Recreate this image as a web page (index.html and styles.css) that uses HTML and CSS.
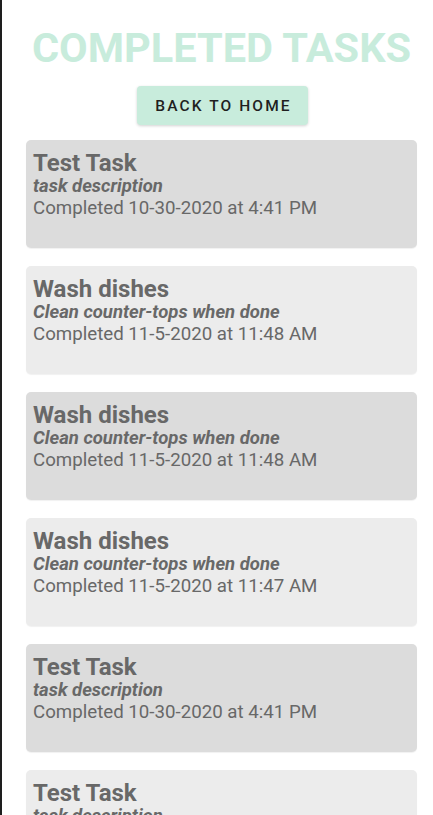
FILE: index.html
```html
<!DOCTYPE html>
<html>
<head>
<meta charset="utf-8">
<link rel="stylesheet" href="styles.css">
</head>
<body>
<div class="page">
  <h1 class="title">COMPLETED TASKS</h1>
  <div class="btn-row"><button class="btn">BACK TO HOME</button></div>
  <div class="list">
    <div class="card dark">
      <div class="name">Test Task</div>
      <div class="desc">task description</div>
      <div class="when">Completed 10-30-2020 at 4:41 PM</div>
    </div>
    <div class="card light">
      <div class="name">Wash dishes</div>
      <div class="desc">Clean counter-tops when done</div>
      <div class="when">Completed 11-5-2020 at 11:48 AM</div>
    </div>
    <div class="card dark">
      <div class="name">Wash dishes</div>
      <div class="desc">Clean counter-tops when done</div>
      <div class="when">Completed 11-5-2020 at 11:48 AM</div>
    </div>
    <div class="card light">
      <div class="name">Wash dishes</div>
      <div class="desc">Clean counter-tops when done</div>
      <div class="when">Completed 11-5-2020 at 11:47 AM</div>
    </div>
    <div class="card dark">
      <div class="name">Test Task</div>
      <div class="desc">task description</div>
      <div class="when">Completed 10-30-2020 at 4:41 PM</div>
    </div>
    <div class="card light">
      <div class="name">Test Task</div>
      <div class="desc">task description</div>
      <div class="when">Completed 10-30-2020 at 4:41 PM</div>
    </div>
  </div>
</div>
</body>
</html>
```
FILE: styles.css
```css
html, body {
  margin: 0;
  padding: 0;
  background: #fff;
}
body {
  font-family: Roboto, "Noto Sans", sans-serif;
  border-left: 2px solid #1e1e1e;
  min-height: 815px;
  box-sizing: border-box;
}
.page {
  padding: 0 16px 0 24px;
}
.title {
  margin: 0;
  padding-top: 24px;
  text-align: center;
  font-size: 41.5px;
  font-weight: 700;
  line-height: 48px;
  color: #c8ecdc;
  letter-spacing: 0;
}
.btn-row {
  display: flex;
  justify-content: center;
  margin-top: 14px;
  padding-left: 2px;
}
.btn {
  width: 171px;
  height: 39px;
  border: none;
  border-radius: 4px;
  background: #c8ecdc;
  box-shadow: 0 1px 3px rgba(0,0,0,0.18);
  font-family: Roboto, sans-serif;
  font-weight: 500;
  font-size: 15.5px;
  letter-spacing: 2.1px;
  color: #1f1f1f;
  padding: 0 0 0 2px;
}
.list {
  display: flex;
  flex-direction: column;
  gap: 18px;
  margin-top: 15px;
}
.card {
  height: 108px;
  box-sizing: border-box;
  border-radius: 5px;
  padding: 10px 7px;
  color: #686868;
  box-shadow: 0 1px 1px rgba(0,0,0,0.06);
  overflow: hidden;
}
.card.dark { background: #dcdcdc; }
.card.light { background: #ececec; }
.name {
  font-size: 24px;
  font-weight: 700;
  line-height: 26px;
}
.desc {
  font-size: 18.5px;
  font-weight: 700;
  font-style: italic;
  line-height: 21px;
}
.when {
  font-size: 18.7px;
  line-height: 22px;
}
```
